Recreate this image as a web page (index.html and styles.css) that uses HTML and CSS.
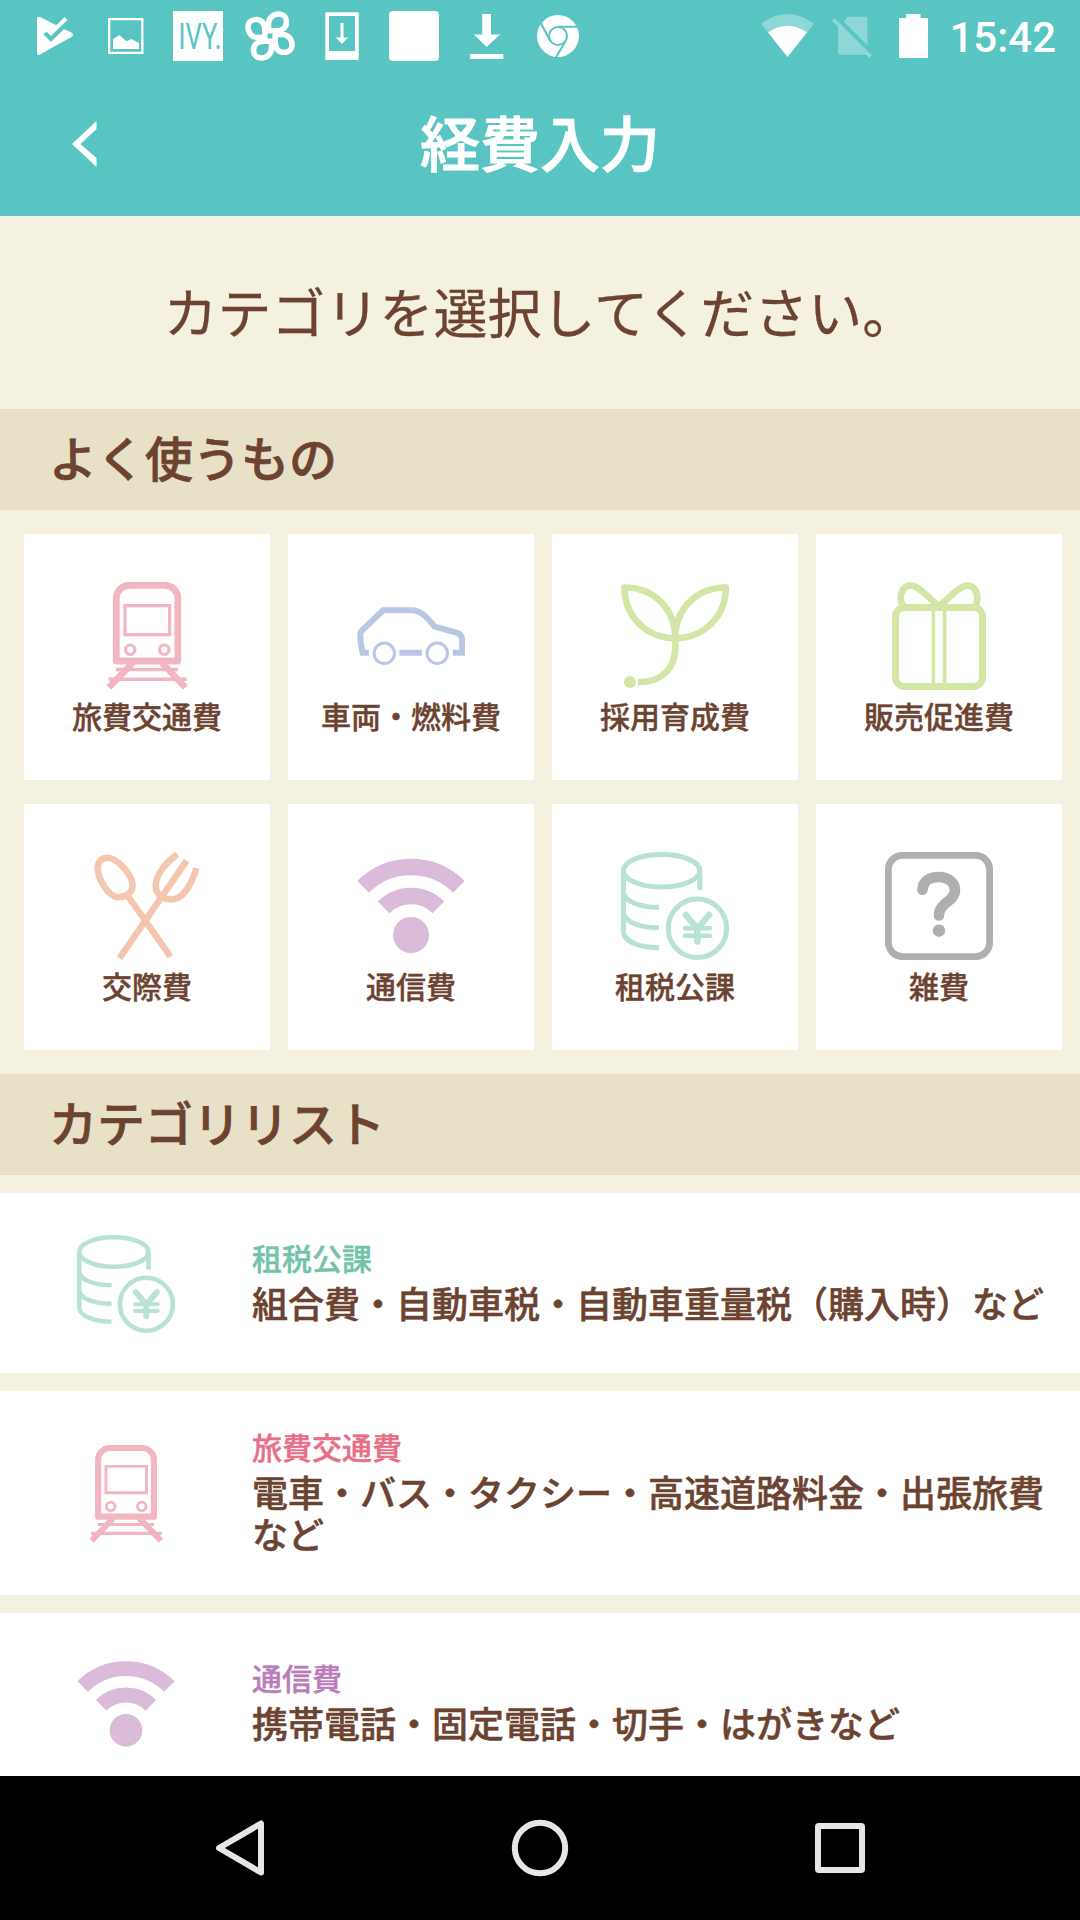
FILE: index.html
```html
<!DOCTYPE html>
<html lang="ja">
<head>
  <meta charset="UTF-8">
  <meta name="viewport" content="width=device-width, initial-scale=1.0">
  <title>経費入力</title>
  <link rel="stylesheet" href="styles.css">
</head>
<body>
  <!-- カテゴリアイコン -->
  <svg class="sprite" aria-hidden="true">
    <symbol id="icon-train" viewBox="0 0 108 108">
      <path d="M23.3 79V16a13 13 0 0 1 13-12.7h35.5a13 13 0 0 1 13 12.7v63z" stroke-width="6.8" stroke-linejoin="round"/>
      <path d="M31.9 23.6h44.7v29H31.9z" stroke-width="3.2"/>
      <circle cx="37.2" cy="67.7" r="4.7" stroke-width="3.2"/>
      <circle cx="71.3" cy="67.7" r="4.7" stroke-width="3.2"/>
      <path d="M23 87.6h62M15.5 97.3h78" stroke-width="3.5"/>
      <path d="M40 80.5L16 105.5M68.5 80.5L92.5 105.5" stroke-width="6.5"/>
    </symbol>
    <symbol id="icon-car" viewBox="0 0 108 108">
      <path d="M11.8 70.7H5.6C4 64 3 58 3.3 51.5Q3.4 50 5 48.5L26 28.3H55.5C63 28.3 71 36 77.6 44.7L99.5 50.7C103.5 52 105.2 55 105.2 59V70.7H95.8M42.4 70.7H64.8" stroke-width="6"/>
      <circle cx="27.3" cy="71.3" r="10.2" stroke-width="3"/>
      <circle cx="80.3" cy="71.3" r="10.2" stroke-width="3"/>
    </symbol>
    <symbol id="icon-sprout" viewBox="0 0 108 108">
      <path d="M3.5 5.5C33 5.5 54.2 27 54.2 56.2C25 56.2 3.5 34 3.5 5.5zM104.9 5.5C75.4 5.5 54.2 27 54.2 56.2C83.4 56.2 104.9 34 104.9 5.5zM54.2 56V66C54.2 85 42 100.3 16.8 100.3" stroke-width="6.6" stroke-linejoin="round"/>
      <circle class="fill" cx="9" cy="100" r="6.1"/>
    </symbol>
    <symbol id="icon-gift" viewBox="0 0 108 108">
      <rect x="10.5" y="25.5" width="87" height="79" rx="9" stroke-width="7"/>
      <path d="M48.4 26v78M59.6 26v78" stroke-width="3.6"/>
      <path d="M54 24.5C45 17 34 3.6 25.5 3.6C17 3.6 12 16 19 25.5M54 24.5C63 17 74 3.6 82.5 3.6C91 3.6 96 16 89 25.5" stroke-width="6.6"/>
    </symbol>
    <symbol id="icon-meal" viewBox="0 0 108 108">
      <path d="M14.5 5.7C24 5.7 39.6 23 39.6 33.5C39.6 40 33 45.3 26 45.3C15 45.3 4.8 26 4.8 16.5C4.8 10 8.5 5.7 14.5 5.7zM34.5 43.5L77.5 104.7M93.6 8.7L26.5 106.3M84.3 2.3C71 12 62.7 24 62.7 34C62.7 42 70 47.5 78.5 47.5C90 47.5 99 32 103.3 16" stroke-width="6.5"/>
    </symbol>
    <symbol id="icon-signal" viewBox="0 0 108 108">
      <path d="M6.2 34.8A67.6 67.6 0 0 1 101.8 34.8M26.6 55.3A38.8 38.8 0 0 1 81.4 55.3" stroke-width="16.5"/>
      <circle class="fill" cx="54" cy="83" r="18"/>
    </symbol>
    <symbol id="icon-coins" viewBox="0 0 108 108">
      <ellipse cx="40.6" cy="18.7" rx="38.2" ry="16.3" stroke-width="5"/>
      <path d="M2.5 18.7V81C4 90 20 95.7 38 95.7M2.5 41C4 50 20 55.3 38 55.3M2.5 61.5C4 70.5 20 75.8 38 75.8M78.8 18.7V38" stroke-width="5"/>
      <circle cx="76.4" cy="76.3" r="29.2" stroke-width="5"/>
      <path d="M64.8 63L76.4 76.5L88 63M76.4 76.5V89.5" stroke-width="6.5" stroke-linecap="round" stroke-linejoin="round"/>
      <path d="M64 76.2H89M64 83.8H89" stroke-width="4.4" stroke-linecap="round"/>
    </symbol>
    <symbol id="icon-other" viewBox="0 0 108 108">
      <rect x="3.4" y="3.4" width="101.2" height="101.2" rx="14" stroke-width="6.8"/>
      <path d="M37.5 37.7C37.5 29 45 25 54 25C63 25 70 30.5 70 38C70 50 54 50 54 63.5" stroke-width="10.5" stroke-linecap="round"/>
      <circle class="fill" cx="54" cy="78.7" r="6.2"/>
    </symbol>
  </svg>

  <div class="screen">
    <header class="app-header">
      <div class="status-bar">
        <div class="notifications">
          <svg viewBox="0 0 72 72"><path d="M19 18.5Q19 16 22 17L38.3 25.3L46.7 17L49.4 20L32.9 36L28.7 31.7L25.2 34.3L32.9 41.7L45.9 29.3L53.5 32.5Q56.5 34.8 53.5 37L22 54.5Q19 56 19 53z"/></svg>
          <svg viewBox="0 0 72 72"><path fill-rule="evenodd" d="M18 18h35.5v36H18zM20.3 20.3v31.4h30.9V20.3z"/><path d="M23 49v-9.7l6.4-4.3 7 6.3 5.2-2.3 7.4 4.3V49z"/></svg>
          <svg viewBox="0 0 72 72"><path d="M11 11h50v50H11z"/><text class="ivy" x="16.5" y="49" textLength="43" lengthAdjust="spacingAndGlyphs">IVY.</text></svg>
          <svg viewBox="0 0 72 72">
            <g class="petals">
              <path id="petal" d="M34.5 30.8V24C34.5 17.5 39.5 14 45 14C50 14 52.5 18 52.5 22C52.5 28 48 30.8 42 30.8z"/>
              <use href="#petal" transform="rotate(90 36 36)"/>
              <use href="#petal" transform="rotate(180 36 36)"/>
              <use href="#petal" transform="rotate(270 36 36)"/>
            </g>
          </svg>
          <svg viewBox="0 0 72 72"><path fill-rule="evenodd" d="M20.3 12.3h31.4q1 0 1 1v45.7q0 1-1 1H20.3q-1 0-1-1V13.3q0-1 1-1zM23 16v35h26V16z"/><path d="M34.5 23h3v14.5H42L36 44l-6.3-6.5h4.8z"/></svg>
          <svg viewBox="0 0 72 72"><rect x="11" y="11" width="50" height="50" rx="4"/></svg>
          <svg viewBox="0 0 72 72"><path d="M32.2 14H41v20.5h9L36.6 47 24 34.5h8.2zM20 54h33.3v5H20z"/></svg>
          <svg viewBox="0 0 72 72"><circle cx="36" cy="36" r="21"/><g class="cut"><circle cx="36" cy="36" r="9"/><path d="M36 26.8h21M28 40.5L18.5 22.5M44 40.5L33.5 58"/></g></svg>
        </div>
        <div class="system">
          <svg class="wifi" viewBox="0 0 54 72"><path class="dim" d="M0 23.7Q26.5 4.5 53 23.7L26.5 57z"/><path d="M7 32.3Q26.5 19 46 32.3L26.5 57z"/></svg>
          <svg class="sim" viewBox="0 0 40 72"><path class="dim" d="M11.7 21.5L15.7 16.7H33Q35.5 16.7 35.5 19.2V45.5zM2.7 18.3L40 55.2L37.3 57.9L34.2 54.8H9Q6 54.8 6 51.8V26.7L0 21z"/></svg>
          <svg class="battery" viewBox="0 0 29 72"><path d="M7 14h14.5v4H29v40H0V18h7z"/></svg>
          <span class="clock">15:42</span>
        </div>
      </div>
      <div class="title-bar">
        <a class="back" href="#" aria-label="戻る"><svg viewBox="0 0 25 46"><path d="M24.5 0L0 23L24.5 46V37L8.4 23L24.5 8z"/></svg></a>
        <h1>経費入力</h1>
      </div>
    </header>

    <main class="content">
      <p class="prompt">カテゴリを選択してください。</p>

      <h2 class="section-title">よく使うもの</h2>
      <div class="tiles">
        <div class="tile"><svg class="icon pink"><use href="#icon-train"/></svg><span>旅費交通費</span></div>
        <div class="tile"><svg class="icon blue"><use href="#icon-car"/></svg><span>車両・燃料費</span></div>
        <div class="tile"><svg class="icon green"><use href="#icon-sprout"/></svg><span>採用育成費</span></div>
        <div class="tile"><svg class="icon green"><use href="#icon-gift"/></svg><span>販売促進費</span></div>
        <div class="tile"><svg class="icon orange"><use href="#icon-meal"/></svg><span>交際費</span></div>
        <div class="tile"><svg class="icon purple"><use href="#icon-signal"/></svg><span>通信費</span></div>
        <div class="tile"><svg class="icon mint"><use href="#icon-coins"/></svg><span>租税公課</span></div>
        <div class="tile"><svg class="icon gray"><use href="#icon-other"/></svg><span>雑費</span></div>
      </div>

      <h2 class="section-title">カテゴリリスト</h2>
      <ul class="category-list">
        <li>
          <svg class="icon mint"><use href="#icon-coins"/></svg>
          <div class="category-text">
            <h3 class="name-mint">租税公課</h3>
            <p>組合費・自動車税・自動車重量税（購入時）など</p>
          </div>
        </li>
        <li>
          <svg class="icon pink"><use href="#icon-train"/></svg>
          <div class="category-text">
            <h3 class="name-pink">旅費交通費</h3>
            <p>電車・バス・タクシー・高速道路料金・出張旅費など</p>
          </div>
        </li>
        <li>
          <svg class="icon purple"><use href="#icon-signal"/></svg>
          <div class="category-text">
            <h3 class="name-purple">通信費</h3>
            <p>携帯電話・固定電話・切手・はがきなど</p>
          </div>
        </li>
      </ul>
    </main>

    <nav class="nav-bar">
      <svg viewBox="0 0 60 60"><path d="M51 5.5V54.5L9 30z"/></svg>
      <svg viewBox="0 0 60 60"><circle cx="30" cy="30" r="25.2"/></svg>
      <svg viewBox="0 0 60 60"><rect x="8" y="8" width="44" height="44" rx="1"/></svg>
    </nav>
  </div>
</body>
</html>
```

FILE: styles.css
```css
* {
  box-sizing: border-box;
  margin: 0;
  padding: 0;
}
body {
  font-family: Roboto, "Noto Sans CJK JP", sans-serif;
  background-color: #f5f1e0;
  color: #6c4330;
}
.sprite {
  display: none;
}
.screen {
  display: flex;
  flex-direction: column;
  width: 1080px;
  height: 1920px;
}

/* ヘッダー */
.app-header {
  flex: none;
  height: 216px;
  background-color: #58c5c3;
  color: #fff;
}
.status-bar {
  display: flex;
  justify-content: space-between;
  height: 72px;
  padding: 0 24px 0 18px;
}
.status-bar svg {
  height: 72px;
  fill: #fff;
  overflow: visible;
}
.notifications {
  display: flex;
}
.notifications svg {
  width: 72px;
}
.status-bar .ivy {
  font-family: Roboto, sans-serif;
  font-size: 36px;
  font-weight: 400;
  fill: #58c5c3;
}
.petals {
  fill: none;
  stroke: #fff;
  stroke-width: 5.6;
}
.cut {
  fill: none;
  stroke: #58c5c3;
  stroke-width: 2;
}
.system {
  display: flex;
}
.system .dim {
  fill-opacity: 0.32;
}
.wifi {
  width: 54px;
  margin-right: 17px;
}
.sim {
  width: 40px;
  margin-right: 27px;
}
.battery {
  width: 29px;
  margin-right: 21px;
}
.clock {
  font-size: 42px;
  font-weight: 500;
  line-height: 75px;
}
.title-bar {
  display: grid;
  grid-template-columns: 168px 1fr 168px;
  align-items: center;
  height: 144px;
}
.back {
  justify-self: center;
}
.back svg {
  display: block;
  width: 25px;
  height: 46px;
  fill: #fff;
}
h1 {
  padding-top: 5px;
  font-size: 60px;
  font-weight: 500;
  line-height: 84px;
  text-align: center;
  -webkit-text-stroke: 1px currentColor;
}

/* コンテンツ */
.content {
  flex: 1;
  min-height: 0;
  overflow: hidden;
}
.prompt {
  height: 193px;
  font-size: 54px;
  line-height: 200px;
  text-align: center;
  -webkit-text-stroke: 0.3px currentColor;
}
.section-title {
  height: 101px;
  padding-left: 49px;
  background-color: #e9e0c8;
  font-size: 48px;
  font-weight: 500;
  line-height: 104px;
  -webkit-text-stroke: 0.7px currentColor;
}
.tiles {
  display: grid;
  grid-template-columns: repeat(4, 246px);
  grid-auto-rows: 246px;
  gap: 24px 18px;
  padding: 24px;
}
.tile {
  display: flex;
  flex-direction: column;
  align-items: center;
  padding-top: 48px;
  background-color: #fff;
  font-size: 30px;
  font-weight: 500;
  line-height: 55px;
}
.tile span {
  -webkit-text-stroke: 0.4px currentColor;
}
.icon {
  width: 108px;
  height: 108px;
  flex: none;
  fill: none;
  stroke: currentColor;
}
.fill {
  fill: currentColor;
  stroke: none;
}
.pink { color: #f2b6c3; }
.blue { color: #bac6e6; }
.green { color: #d3e6a6; }
.orange { color: #f4c6ae; }
.purple { color: #dabbd9; }
.mint { color: #b8e2d6; }
.gray { color: #afafaf; }

.category-list {
  display: flex;
  flex-direction: column;
  gap: 18px;
  padding-top: 18px;
  list-style: none;
}
.category-list li {
  display: flex;
  align-items: center;
  min-height: 180px;
  padding: 38px 24px 37px 77px;
  background-color: #fff;
}
.category-list .icon {
  width: 98px;
  height: 98px;
  margin-right: 77px;
}
.category-text {
  padding-top: 5px;
}
.category-text h3 {
  margin-bottom: 10px;
  font-size: 30px;
  font-weight: 500;
  line-height: 30px;
  -webkit-text-stroke: 0.4px currentColor;
}
.category-text p {
  font-size: 36px;
  font-weight: 500;
  line-height: 42px;
  -webkit-text-stroke: 0.5px currentColor;
}
.name-mint { color: #74c2ab; }
.name-pink { color: #e66e87; }
.name-purple { color: #b97db9; }

/* ナビゲーションバー */
.nav-bar {
  flex: none;
  display: flex;
  justify-content: space-around;
  align-items: center;
  height: 144px;
  padding: 0 90px;
  background-color: #000;
}
.nav-bar svg {
  width: 60px;
  height: 60px;
  fill: none;
  stroke: #e7e5e5;
  stroke-width: 6;
  stroke-linejoin: round;
}
```
